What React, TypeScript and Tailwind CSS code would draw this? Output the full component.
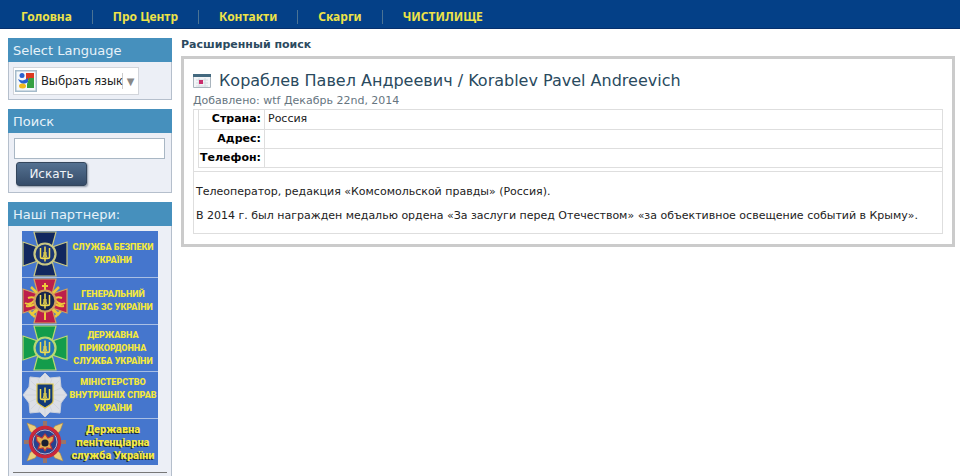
import type { ReactNode } from "react";

const menu = ["Головна", "Про Центр", "Контакти", "Скарги", "ЧИСТИЛИЩЕ"];

const details = [
  { label: "Страна:", value: "Россия" },
  { label: "Адрес:", value: "" },
  { label: "Телефон:", value: "" },
];

function Trident({ color }: { color: string }) {
  return (
    <g fill="none" stroke={color} strokeWidth="1.5" strokeLinejoin="round">
      <path d="M18.500 17v9q0 1.500 2 1.500h5q2 0 2-1.500v-9M23 15.500v15" />
      <path d="M20.800 27q1.700-3 1.200-6M25.200 27q-1.700-3-1.200-6" strokeWidth="1" />
    </g>
  );
}

function CrossEmblem({ fill, edge, center, swords }: { fill: string; edge: string; center: string; swords?: boolean }) {
  return (
    <svg viewBox="0 0 46 46" className="size-full" aria-hidden="true">
      {swords && (
        <g stroke="#e8c93c" strokeWidth="2.500">
          <path d="M9 9l28 28M37 9L9 37" />
          <path d="M7 33l6 6M39 33l-6 6" />
        </g>
      )}
      <path
        d="M12 1h22L30 16L45 11v24L30 30L34 45H12L16 30L1 35V11L16 16z"
        fill={fill}
        stroke={edge}
        strokeWidth="1.200"
      />
      {swords && (
        <g fill="none" stroke="#ecc93a" strokeWidth="2">
          <path d="M3 25q5 3 11-4M4 28q6 1 10-3M6 20q5-2 8 1M43 25q-5 3-11-4M42 28q-6 1-10-3M40 20q-5-2-8 1" />
          <path d="M23 5v8M20 8h6M23 34v8M17 17l-5-5M29 17l5-5M17 30l-5 5M29 30l5 5" />
        </g>
      )}
      <circle cx="23" cy="23" r="10.500" fill={center} stroke={edge} strokeWidth="2.200" />
      <Trident color="#f0dc50" />
    </svg>
  );
}

function StarEmblem() {
  return (
    <svg viewBox="0 0 46 46" className="size-full" aria-hidden="true">
      <path
        d="M23 1l5 5 10-1 1 10 6 8-6 8-1 10-10-1-5 5-5-5-10 1-1-10-6-8 6-8 1-10 10 1z"
        fill="#dcdfe6"
        stroke="#c9cfdb"
      />
      <path
        d="M23 3v40M3 23h40M9 9l28 28M37 9L9 37M16 7l14 32M30 7L16 39M7 16l32 14M39 16L7 30"
        stroke="#cbd0da"
        strokeWidth=".7"
      />
      <path d="M15 12h16v17c0 3-4 4-8 7-4-3-8-4-8-7z" fill="#123a78" stroke="#e0c84a" strokeWidth="1.200" />
      <Trident color="#f0dc50" />
    </svg>
  );
}

function WheelEmblem() {
  return (
    <svg viewBox="0 0 46 46" className="size-full" aria-hidden="true">
      <path d="M23 2v42M2 23h42" stroke="#9a7468" strokeWidth="4" />
      <path
        d="M5 4l8 3 5 7h10l5-7 8-3-3 8-7 6v10l7 6 3 8-8-3-5-7H18l-5 7-8 3 3-8 7-6V18l-7-6z"
        fill="#e9cf7c"
        stroke="#b98a3c"
        strokeWidth=".6"
      />
      <circle cx="23" cy="23" r="14.500" fill="#26428f" stroke="#c9283a" strokeWidth="3.400" />
      <circle cx="23" cy="23" r="12" fill="none" stroke="#d7cfdc" strokeWidth=".8" />
      <path
        d="M23 15l3 4 6-3-1 6-3 3 2 5-5-1-2 3-2-3-5 1 2-5-3-3-1-6 6 3z"
        fill="#e2ad4c"
        stroke="#b8323c"
        strokeWidth="1.200"
      />
      <circle cx="23" cy="24" r="3.600" fill="#1b2030" />
    </svg>
  );
}

const partners: { lines: string[]; emblem: ReactNode; shadow?: boolean }[] = [
  {
    lines: ["СЛУЖБА БЕЗПЕКИ", "УКРАЇНИ"],
    emblem: <CrossEmblem fill="#12285f" edge="#c9c783" center="#1c3672" />,
  },
  {
    lines: ["ГЕНЕРАЛЬНИЙ", "ШТАБ ЗС УКРАЇНИ"],
    emblem: <CrossEmblem fill="#bd1f4a" edge="#d3a05c" center="#17264b" swords />,
  },
  {
    lines: ["ДЕРЖАВНА", "ПРИКОРДОННА", "СЛУЖБА УКРАЇНИ"],
    emblem: <CrossEmblem fill="#139c4b" edge="#b9d873" center="#2475b5" />,
  },
  { lines: ["МІНІСТЕРСТВО", "ВНУТРІШНІХ СПРАВ", "УКРАЇНИ"], emblem: <StarEmblem /> },
  { lines: ["Державна", "пенітенціарна", "служба України"], emblem: <WheelEmblem />, shadow: true },
];

function Panel({ title, children }: { title: string; children: ReactNode }) {
  return (
    <section className="border border-[#b5bfcc] bg-[#eceff6]">
      <h2 className="-mx-px -mt-px h-6 bg-[#4690bd] pl-[5px] text-[13px] leading-[26px] text-[#e6f2f9]">{title}</h2>
      {children}
    </section>
  );
}

function LanguageIcon() {
  return (
    <svg viewBox="0 0 22 22" className="size-[22px] shrink-0" aria-hidden="true">
      <path d="M.5.5h21v21H.5z" fill="#f5f8fb" stroke="#a5bbcb" strokeWidth="2" />
      <path d="M11 3h8v7h-8z" fill="#dc3a22" />
      <path d="M14 8h5v10h-7v-4z" fill="#35a043" />
      <circle cx="7" cy="5.500" r="2.500" fill="#2860d0" />
      <path d="M3 9c3 2 6 2 10-1v4c-4 3-8 2-10-3z" fill="#2860d0" />
      <ellipse cx="7.500" cy="16" rx="3.500" ry="2.500" fill="#f1b91d" />
    </svg>
  );
}

function CalendarIcon() {
  return (
    <svg viewBox="0 0 18 16" className="h-4 w-[18px] shrink-0" aria-hidden="true">
      <path d="M.5 1.500h17v13H.5z" fill="#f3f5f7" stroke="#a9b4bd" />
      <path d="M0 1h18v3H0z" fill="#43697f" />
      <path d="M3 7h12M3 10h12M3 13h12M6 5v9M12 5v9" stroke="#d5dce2" />
      <path d="M6 7h4v4H6z" fill="#c92d6c" />
    </svg>
  );
}

export default function App() {
  return (
    <div className="h-screen overflow-hidden bg-white font-['DejaVu_Sans',sans-serif] text-[11px] text-[#222]">
      <nav className="h-[29px] border-b border-[#06306d] bg-[#044087]">
        <ul className="flex h-full items-center pt-[5px] pl-px">
          {menu.map((item) => (
            <li key={item} className="border-r border-[#4b7394] px-5 last:border-r-0">
              <a href="#" className="block font-['Noto_Sans','DejaVu_Sans',sans-serif] text-[12px] leading-[14px] font-bold text-[#eee348]">
                {item}
              </a>
            </li>
          ))}
        </ul>
      </nav>

      <div className="flex items-start gap-[9px] pt-[9px] pr-[5px] pl-2">
        <aside className="flex w-[164px] shrink-0 flex-col gap-[9px]">
          <Panel title="Select Language">
            <div className="px-1 pt-[5px] pb-1">
              <button
                type="button"
                className="flex h-7 w-[126px] items-center border border-[#d2d5db] bg-white pl-px font-['Noto_Sans','DejaVu_Sans',sans-serif] text-[12px] whitespace-nowrap"
              >
                <LanguageIcon />
                <span className="ml-1 grow border-r border-[#ccc] text-left leading-4">Выбрать язык</span>
                <span className="w-4 text-center text-[10px] text-[#888]">▼</span>
              </button>
            </div>
          </Panel>

          <Panel title="Поиск">
            <form className="px-[5px] pt-[5px] pb-[6px]" onSubmit={(e) => e.preventDefault()}>
              <input
                type="text"
                aria-label="Поиск"
                className="block h-[21px] w-[151px] border border-[#a9b7c4] bg-white px-1 outline-none"
              />
              <button
                type="submit"
                className="mt-[3px] ml-0.5 block h-6 w-[71px] rounded-[3px] border border-[#34465c] bg-linear-to-b from-[#557191] to-[#354c69] text-[12px] leading-5 text-[#f0f4f8] shadow-[1px_1px_2px_#8c97a6]"
              >
                Искать
              </button>
            </form>
          </Panel>

          <Panel title="Наші партнери:">
            <ul className="mx-[13px] mt-[5px] w-[136px]">
              {partners.map((partner) => (
                <li key={partner.lines[0]} className="border-b border-[#a9bfe4] bg-[#4576cd] last:border-b-0">
                  <a href="#" className="flex h-[46px] items-center">
                    <span className="size-[46px] shrink-0">{partner.emblem}</span>
                    <span
                      className={`flex min-w-0 grow flex-col items-center font-['Roboto',sans-serif] leading-[13px] font-black whitespace-nowrap text-[#f3e83c] ${
                        partner.shadow ? "text-[11px] [text-shadow:-1px_1px_0_#1b2540]" : "text-[9px]"
                      }`}
                    >
                      {partner.lines.map((line) => (
                        <span key={line} className="block">
                          {line}
                        </span>
                      ))}
                    </span>
                  </a>
                </li>
              ))}
            </ul>
            <hr className="mx-1 mt-[7px] mb-3 border-t border-[#777]" />
          </Panel>
        </aside>

        <main className="min-w-0 grow">
          <a href="#" className="block text-[11px] leading-[14px] font-bold text-[#2c4a60]">
            Расширенный поиск
          </a>
          <article className="mt-1 border-[3px] border-[#cbcbcb] px-[9px] pt-3 pb-[10px]">
            <h1 className="flex items-center gap-2 text-[16px] leading-5 text-[#2a4a5e]">
              <CalendarIcon />
              Кораблев Павел Андреевич / Korablev Pavel Andreevich
            </h1>
            <p className="mt-0.5 text-[11px] leading-4 text-[#667580]">Добавлено: wtf Декабрь 22nd, 2014</p>
            <div className="border border-[#dedede]">
              <div className="border-b border-[#dedede] pb-[3px] pl-1">
                <table className="w-full border-collapse">
                  <tbody>
                    {details.map((row) => (
                      <tr key={row.label} className="h-[19px] border-b border-l border-[#dedede]">
                        <th scope="row" className="w-[66px] border-r border-[#dedede] pr-[3px] text-right leading-4 font-bold whitespace-nowrap text-black">
                          {row.label}
                        </th>
                        <td className="pl-[3px] leading-4">{row.value}</td>
                      </tr>
                    ))}
                  </tbody>
                </table>
              </div>
              <div className="px-0.5 pt-3 pb-[9px] leading-4">
                <p>Телеоператор, редакция «Комсомольской правды» (Россия).</p>
                <p className="mt-2">
                  В 2014 г. был награжден медалью ордена «За заслуги перед Отечеством» «за объективное освещение событий в Крыму».
                </p>
              </div>
            </div>
          </article>
        </main>
      </div>
    </div>
  );
}
